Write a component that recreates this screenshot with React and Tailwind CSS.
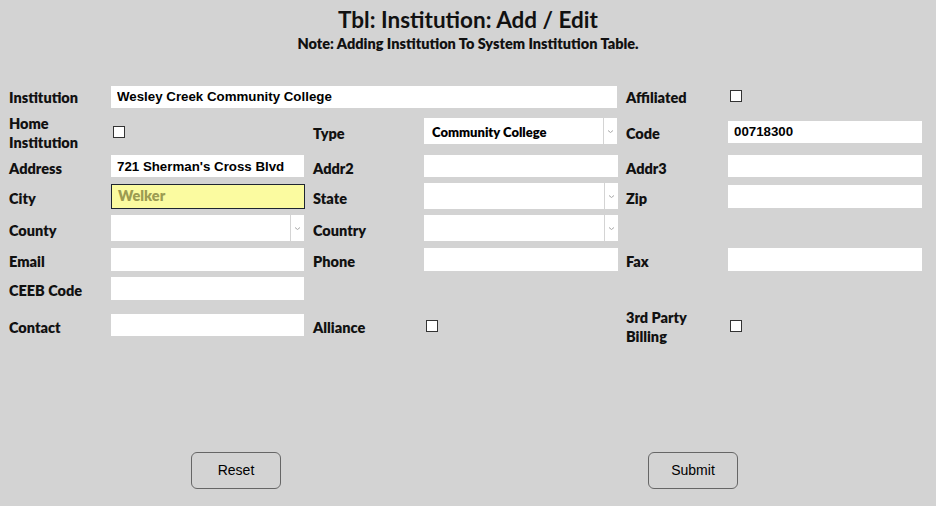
import { useState } from "react";

const labelFont = { fontFamily: "Lato, 'Noto Sans', sans-serif" };

const Label = ({ children }) => (
  <div className="flex h-0 flex-col justify-center overflow-visible">
    <div className="translate-y-[1.5px] text-[14.5px] font-extrabold leading-[19px] text-[#111]" style={labelFont}>
      {children}
    </div>
  </div>
);

const TextInput = ({ value = "", className = "h-[22px] w-[193px]" }) => (
  <input
    readOnly
    value={value}
    className={`bg-white px-[6px] text-[13.3px] font-bold text-black outline-none ${className}`}
    style={{ fontFamily: "'Liberation Sans', Arial, sans-serif" }}
  />
);

const Select = ({ value = "", className = "w-[193px]" }) => (
  <div className={`flex h-[26px] bg-white ${className}`}>
    <div className="flex flex-1 items-center px-[8px] pt-[3px] text-[13px] font-extrabold text-black" style={labelFont}>
      {value}
    </div>
    <div className="flex w-[14px] items-center justify-center border-l border-[#d4d4d4]">
      <svg width="7" height="5" viewBox="0 0 7 5">
        <path d="M1 1.5 L3.5 3.5 L6 1.5" fill="none" stroke="#a8a8a8" strokeWidth="1" />
      </svg>
    </div>
  </div>
);

const Check = () => {
  const [on, setOn] = useState(false);
  return (
    <button
      onClick={() => setOn(!on)}
      className="ml-[2px] mt-[1px] h-[12px] w-[12px] border border-[#333] bg-white"
    />
  );
};

const Row = ({ className, children }) => (
  <div className={`grid grid-cols-[102px_202px_111px_202px_102px_194px] items-center ${className}`}>
    {children}
  </div>
);

export default function App() {
  return (
    <div className="relative h-[506px] w-[936px] bg-[#d3d3d3]">
      <div className="pt-[7px] text-center text-[#111]" style={labelFont}>
        <h1 className="text-[22.5px] font-bold leading-[26px]">Tbl: Institution: Add / Edit</h1>
        <p className="mt-[2px] text-[14.5px] font-extrabold leading-[18px]">
          Note: Adding Institution To System Institution Table.
        </p>
      </div>

      <div className="pl-[9px]">
        <Row className="mt-[30px] h-[22px]">
          <Label>Institution</Label>
          <div className="col-span-3">
            <TextInput value="Wesley Creek Community College" className="h-[22px] w-[506px]" />
          </div>
          <Label>Affiliated</Label>
          <Check />
        </Row>

        <Row className="mt-[13px] h-[26px]">
          <Label>
            Home
            <br />
            Institution
          </Label>
          <Check />
          <Label>Type</Label>
          <Select value="Community College" />
          <Label>Code</Label>
          <div className="h-[26px]">
            <TextInput value="00718300" className="h-[22px] w-[194px]" />
          </div>
        </Row>

        <Row className="mt-[11px] h-[22px]">
          <Label>Address</Label>
          <TextInput value="721 Sherman's Cross Blvd" />
          <Label>Addr2</Label>
          <TextInput className="h-[22px] w-[194px]" />
          <Label>Addr3</Label>
          <TextInput className="h-[22px] w-[194px]" />
        </Row>

        <Row className="mt-[6px] h-[26px]">
          <Label>City</Label>
          <div className="flex h-[25px] w-[194px] items-center border border-[#1e2530] bg-[#fbfba0] px-[6px] text-[14.5px] font-extrabold text-[#9c9c52]" style={labelFont}>
            Welker
          </div>
          <Label>State</Label>
          <Select className="w-[194px]" />
          <Label>Zip</Label>
          <TextInput className="h-[23px] w-[194px]" />
        </Row>

        <Row className="mt-[6px] h-[26px]">
          <Label>County</Label>
          <Select />
          <Label>Country</Label>
          <Select className="w-[194px]" />
        </Row>

        <Row className="mt-[7px] h-[23px]">
          <Label>Email</Label>
          <TextInput className="h-[23px] w-[193px]" />
          <Label>Phone</Label>
          <TextInput className="h-[23px] w-[194px]" />
          <Label>Fax</Label>
          <TextInput className="h-[23px] w-[194px]" />
        </Row>

        <Row className="mt-[6px] h-[23px]">
          <Label>CEEB Code</Label>
          <TextInput className="h-[23px] w-[193px]" />
        </Row>

        <Row className="mt-[14px] h-[22px]">
          <Label>Contact</Label>
          <TextInput />
          <Label>Alliance</Label>
          <Check />
          <Label>
            3rd Party
            <br />
            Billing
          </Label>
          <Check />
        </Row>
      </div>

      <div className="mt-[116px] flex" style={{ fontFamily: "'Liberation Sans', Arial, sans-serif" }}>
        <button className="ml-[191px] h-[37px] w-[90px] rounded-[6px] border border-[#666] text-[14px] text-black">
          Reset
        </button>
        <button className="ml-[367px] h-[37px] w-[90px] rounded-[6px] border border-[#666] text-[14px] text-black">
          Submit
        </button>
      </div>
    </div>
  );
}
